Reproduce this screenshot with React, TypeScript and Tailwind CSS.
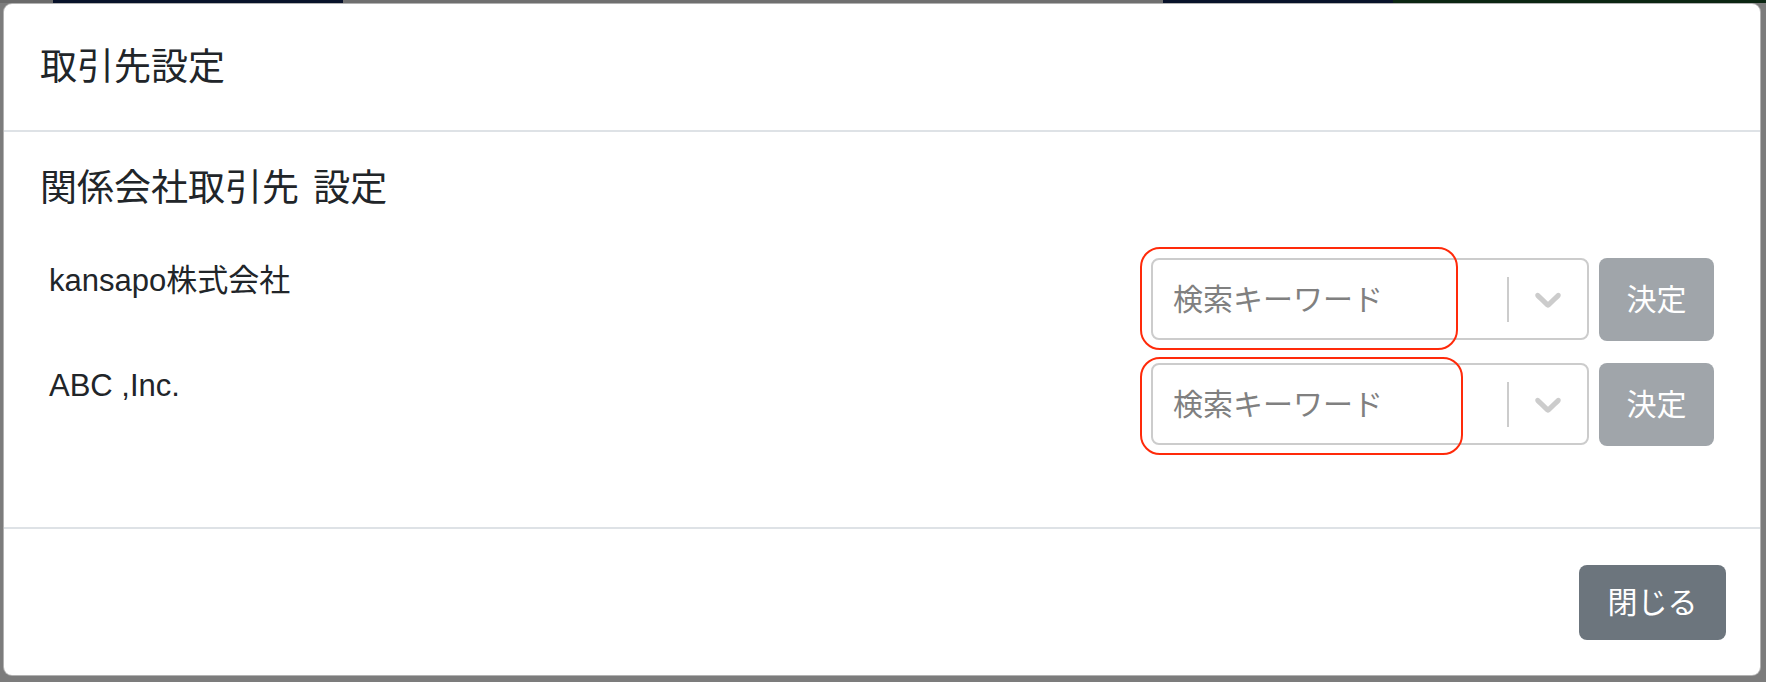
import React from "react";

function Chevron() {
  return (
    <svg width="44" height="44" viewBox="0 0 20 20" aria-hidden="true">
      <path
        fill="#cccccc"
        d="M4.516 7.548c0.436-0.446 1.043-0.481 1.576 0l3.908 3.747 3.908-3.747c0.533-0.481 1.141-0.446 1.574 0 0.436 0.445 0.408 1.197 0 1.615-0.406 0.418-4.695 4.502-4.695 4.502-0.217 0.223-0.502 0.335-0.787 0.335s-0.57-0.112-0.789-0.335c0 0-4.287-4.084-4.695-4.502s-0.436-1.17 0-1.615z"
      />
    </svg>
  );
}

function Row({
  label,
  redClass,
}: {
  label: string;
  redClass: string;
}) {
  return (
    <div className="flex items-start justify-between h-[83px]">
      <div className="pl-[9px] text-[31px] leading-[45px] text-[#212529]">{label}</div>
      <div className="relative flex items-start gap-[10px]">
        <div className="w-[438px] h-[82px] border-2 border-[#cccccc] rounded-[8px] flex items-center bg-white">
          <div className="flex-1 pl-[20px] text-[30px] leading-[45px] text-[#808080]">検索キーワード</div>
          <div className="w-[2px] h-[45px] bg-[#cccccc]" />
          <div className="w-[78px] flex items-center justify-center">
            <Chevron />
          </div>
        </div>
        <button className="w-[115px] h-[83px] rounded-[8px] bg-[#a0a5aa] text-white text-[30px] leading-[45px] flex items-center justify-center">
          決定
        </button>
        <div className={redClass} />
      </div>
    </div>
  );
}

export default function App() {
  return (
    <div className="w-[1766px] h-[682px] bg-[#7c7c7c] overflow-hidden flex flex-col font-['Liberation_Sans','Noto_Sans_CJK_JP',sans-serif]">
      <div className="h-[3px] flex shrink-0">
        <div className="w-[53px] bg-[#6a6a6a]" />
        <div className="w-[290px] bg-[#08122a]" />
        <div className="w-[820px] bg-[#6f6f6f]" />
        <div className="w-[230px] bg-[#08122a]" />
        <div className="flex-1 bg-[#0b2612]" />
      </div>
      <div className="ml-[3px] w-[1758px] h-[673px] shrink-0 bg-white border border-black/30 rounded-[9px] flex flex-col overflow-hidden">
        <div className="h-[128px] shrink-0 border-b-2 border-[#dee2e6] px-[36px] flex items-center">
          <div className="text-[37px] leading-[55px] text-[#212529]">取引先設定</div>
        </div>
        <div className="h-[397px] shrink-0 border-b-2 border-[#dee2e6] pt-[35px] pl-[36px] pr-[46px] flex flex-col">
          <div className="text-[37px] leading-[44px] text-[#212529] mb-[47px] [word-spacing:4px]">関係会社取引先 設定</div>
          <div className="flex flex-col gap-[22px]">
            <Row
              label="kansapo株式会社"
              redClass="absolute left-[-11px] top-[-11px] w-[318px] h-[103px] border-[2.5px] border-[#ff2a0a] rounded-[20px] pointer-events-none"
            />
            <Row
              label="ABC ,Inc."
              redClass="absolute left-[-11px] top-[-6px] w-[323px] h-[98px] border-[2.5px] border-[#ff2a0a] rounded-[20px] pointer-events-none"
            />
          </div>
        </div>
        <div className="flex-1 flex items-center justify-end pr-[34px]">
          <button className="w-[147px] h-[75px] rounded-[8px] bg-[#6c757d] text-white text-[30px] leading-[45px] flex items-center justify-center">
            閉じる
          </button>
        </div>
      </div>
    </div>
  );
}
